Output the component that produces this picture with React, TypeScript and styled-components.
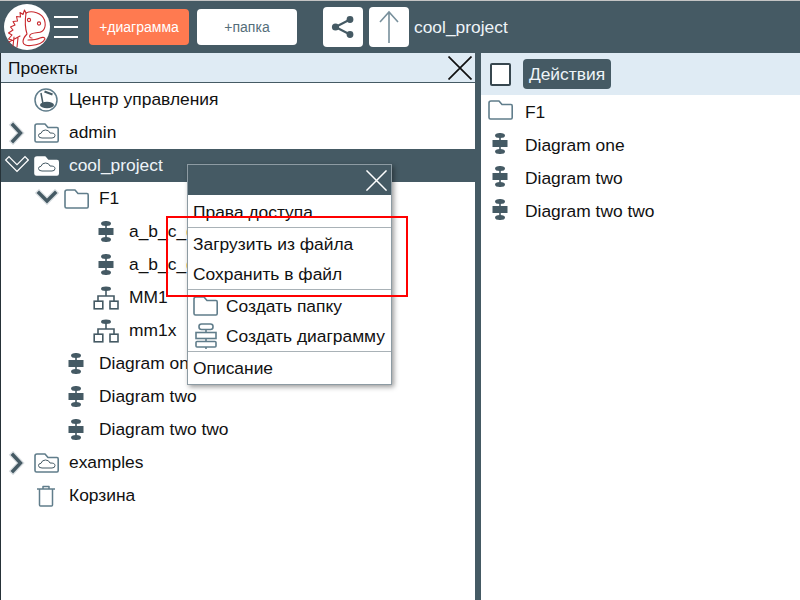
import React from "react";
import styled, { createGlobalStyle } from "styled-components";

const Dark = "#455a64";
const IconLine = "#607d8b";
const PanelHead = "#dfebf4";

const GlobalStyle = createGlobalStyle`
  html, body {
    margin: 0;
    padding: 0;
    width: 800px;
    height: 600px;
    overflow: hidden;
    background: #fff;
    font-family: "Liberation Sans", Arial, sans-serif;
    font-size: 17.4px;
    color: #111;
  }
`;

const Page = styled.div`
  position: relative;
  width: 800px;
  height: 600px;
  display: flex;
  flex-direction: column;
  border-top: 1px solid #c4c4c4;
  box-sizing: border-box;
`;

const TopBar = styled.div`
  height: 52px;
  flex: none;
  display: flex;
  align-items: center;
  background: ${Dark};
  padding-left: 4px;
`;

const LogoSvg = styled.svg`
  width: 46px;
  height: 46px;
  flex: none;
`;

const Burger = styled.div`
  width: 24px;
  height: 22px;
  margin-left: 4px;
  display: flex;
  flex-direction: column;
  justify-content: space-between;
  span {
    display: block;
    height: 2px;
    background: #fff;
  }
`;

const TextButton = styled.button<{ $accent?: boolean; $left: number }>`
  width: 100px;
  height: 36px;
  margin-left: ${(p) => p.$left}px;
  border: none;
  border-radius: 4px;
  padding: 0;
  font-family: inherit;
  font-size: 14px;
  background: ${(p) => (p.$accent ? "#ff7a50" : "#fff")};
  color: ${(p) => (p.$accent ? "#fff" : "#546e7a")};
`;

const IconButton = styled.button<{ $left: number }>`
  width: 40px;
  height: 40px;
  margin-left: ${(p) => p.$left}px;
  border: none;
  border-radius: 4px;
  padding: 0;
  background: #fff;
  display: flex;
  align-items: center;
  justify-content: center;
`;

const ProjectTitle = styled.span`
  margin-left: 5px;
  color: #eef4f8;
`;

const Main = styled.div`
  flex: 1;
  display: flex;
  min-height: 0;
`;

const LeftPane = styled.div`
  width: 475px;
  flex: none;
  box-sizing: border-box;
  border-left: 1px solid #263238;
  overflow: hidden;
`;

const Splitter = styled.div`
  width: 6px;
  flex: none;
  background: ${Dark};
`;

const RightPane = styled.div`
  flex: 1;
  overflow: hidden;
`;

const PaneHeader = styled.div`
  height: 29px;
  display: flex;
  align-items: center;
  justify-content: space-between;
  padding: 0 3px 0 7px;
  background: ${PanelHead};
  border-bottom: 1px solid ${Dark};
`;

const PaneTitle = styled.span`
  padding-top: 2px;
`;

const ActionsHeader = styled.div`
  height: 42px;
  display: flex;
  align-items: center;
  padding-left: 9px;
  background: ${PanelHead};
`;

const CheckBox = styled.div`
  width: 17px;
  height: 19px;
  box-sizing: content-box;
  background: #fff;
  border: 2px solid #37474f;
  border-radius: 2px;
`;

const ActionsButton = styled.button`
  margin-left: 12px;
  width: 88px;
  height: 30px;
  border: none;
  border-radius: 4px;
  padding: 0;
  background: ${Dark};
  color: #eef4f8;
  font-family: inherit;
  font-size: 17.4px;
`;

const Row = styled.div<{ $level?: number; $selected?: boolean }>`
  height: 33px;
  display: flex;
  align-items: center;
  white-space: nowrap;
  padding-left: ${(p) => (p.$level ?? 0) * 30}px;
  background: ${(p) => (p.$selected ? Dark : "transparent")};
  color: ${(p) => (p.$selected ? "#eef4f8" : "#111")};
`;

const Toggle = styled.span`
  width: 31px;
  height: 33px;
  flex: none;
  display: flex;
  align-items: center;
  justify-content: center;
`;

const IconSlot = styled.span`
  width: 28px;
  height: 33px;
  margin-right: 9px;
  flex: none;
  display: flex;
  align-items: center;
  justify-content: center;
`;

const RightRow = styled.div`
  height: 33px;
  box-sizing: border-box;
  display: flex;
  align-items: center;
  padding: 2px 0 0 5px;
  white-space: nowrap;
`;

const RightIcon = styled.span`
  width: 28px;
  margin: -5px 11px 0 0;
  flex: none;
  display: flex;
  justify-content: center;
`;

const OrangeMark = styled.span`
  color: #d9782d;
`;

const Menu = styled.div`
  position: absolute;
  left: 187px;
  top: 163px;
  width: 205px;
  box-sizing: border-box;
  background: #fff;
  border: 1px solid #8d9ba3;
  box-shadow: 2px 2px 5px rgba(0, 0, 0, 0.4);
`;

const MenuHead = styled.div`
  height: 30px;
  display: flex;
  align-items: center;
  justify-content: flex-end;
  padding-right: 4px;
  background: ${Dark};
`;

const MenuSection = styled.div<{ $first?: boolean; $last?: boolean }>`
  padding-top: ${(p) => (p.$first ? 2 : 1)}px;
  padding-bottom: ${(p) => (p.$last ? 1 : 0)}px;
  border-bottom: ${(p) => (p.$last ? "none" : "1px solid #a9b2b7")};
`;

const MenuItem = styled.div`
  height: 30px;
  display: flex;
  align-items: center;
  padding-left: 5px;
  white-space: nowrap;
`;

const MenuIcon = styled.span`
  width: 25px;
  margin-right: 8px;
  flex: none;
  display: flex;
  justify-content: center;
`;

const Highlight = styled.div`
  position: absolute;
  left: 166px;
  top: 215px;
  width: 242px;
  height: 81px;
  box-sizing: border-box;
  border: 2px solid #ff0000;
  pointer-events: none;
`;

const Logo = () => (
  <LogoSvg viewBox="4 4 46 46">
    <circle cx="27" cy="27" r="23" fill="#fff" />
    <g fill="none" stroke="#c8282d" strokeWidth="1.1" strokeLinejoin="round" strokeLinecap="round">
      <path d="M26 13 C32 10 42 13 44.5 20 C46.5 27 44 32 38 32.5 C34 33 31 33 30 35 C29 37 30 38 32 38" />
      <path d="M26 13 L24.5 10 L23 14.5 L20 12.5 L20.5 17 L16.5 16.5 L17.5 21 L13 21.5 L15 25 L10.5 27 L13 30 L8.5 33 L12 35 L8.5 39 L12 40" />
      <path d="M26 13 C25 20 25 28 27 34 C25 36 23 39 23 42 C23 45 27 46 31 45.5 C37 45 43 43 45 39 C45 37 42 37 40 38 C36 40 32 40 28 40" />
      <path d="M9 42 L20 36 M13 46 L14 37 M17 47 L18 38" />
      <circle cx="29" cy="20" r="1.6" />
      <circle cx="39" cy="23.5" r="1.6" />
    </g>
  </LogoSvg>
);

const ShareIcon = () => (
  <svg width="24" height="24" viewBox="0 0 24 24" fill={Dark}>
    <circle cx="4.5" cy="12" r="3.6" />
    <circle cx="19" cy="4.5" r="3.4" />
    <circle cx="19" cy="19.5" r="3.4" />
    <path d="M4.5 12 L19 4.5 M4.5 12 L19 19.5" stroke={Dark} strokeWidth="2" />
  </svg>
);

const UpArrow = () => (
  <svg width="22" height="34" viewBox="0 0 22 34" fill="none" stroke="#78909c" strokeWidth="1.6">
    <path d="M11 33 V2 M2 12 L11 2 L20 12" />
  </svg>
);

const Cross = ({ size, color }: { size: number; color: string }) => (
  <svg width={size} height={size} viewBox="0 0 24 24" stroke={color} strokeWidth="1.7">
    <path d="M0.5 0.5 L23.5 23.5 M23.5 0.5 L0.5 23.5" />
  </svg>
);

const Chevron = ({ open, selected }: { open?: boolean; selected?: boolean }) => {
  const d = open ? "M4 6 L12 14 L20 6" : "M8 4 L15.5 12 L8 20";
  return (
    <svg width="24" height="24" viewBox="0 0 24 24" fill="none" strokeLinecap="square">
      <path d={d} stroke={selected ? "#fff" : "#d9dee1"} strokeWidth="6" />
      <path d={d} stroke={Dark} strokeWidth="3.4" />
    </svg>
  );
};

const Folder = ({ width = 25 }: { width?: number }) => (
  <svg width={width} height="20" viewBox="0 0 25 20" fill="none" stroke={IconLine} strokeWidth="1.6" strokeLinejoin="round">
    <path d="M1 3 Q1 1 3 1 H11 L14 4.5 H23 Q24.2 4.5 24.2 6 V17.5 Q24.2 19 23 19 H2.5 Q1 19 1 17.5 Z" />
  </svg>
);

const CloudFolder = ({ selected }: { selected?: boolean }) => (
  <svg width="25" height="20" viewBox="0 0 25 20" strokeLinejoin="round">
    <path
      d="M1 3 Q1 1 3 1 H11 L14 4.5 H23 Q24.2 4.5 24.2 6 V17.5 Q24.2 19 23 19 H2.5 Q1 19 1 17.5 Z"
      fill={selected ? "#fff" : "none"}
      stroke={selected ? "#fff" : IconLine}
      strokeWidth="1.6"
    />
    <path
      d="M8 15 Q4.5 15 4.5 12.5 Q4.5 10.5 7 10.3 Q8 7 11.5 7 Q15 7 16 10 Q21 9.8 21 12.5 Q21 15 18 15 Z"
      fill="none"
      stroke={Dark}
      strokeWidth="1"
    />
  </svg>
);

const CenterIcon = () => (
  <svg width="24" height="24" viewBox="0 0 24 24" fill="none" stroke={IconLine} strokeWidth="1.5">
    <circle cx="12" cy="12" r="11" />
    <ellipse cx="13" cy="17" rx="7" ry="3.2" fill={Dark} stroke="none" />
    <path d="M7 5 L9 16" stroke={Dark} />
    <path d="M10.5 3.5 L18.5 6.5" stroke={Dark} strokeWidth="2" />
  </svg>
);

const TrashIcon = () => (
  <svg width="20" height="22" viewBox="0 0 20 22" fill="none" stroke={IconLine} strokeWidth="1.5" strokeLinejoin="round">
    <path d="M1 4 H19 M7 4 V1.5 H13 V4" />
    <path d="M3.5 4 V20 Q3.5 21 4.5 21 H15.5 Q16.5 21 16.5 20 V4" />
  </svg>
);

const DiagramIcon = () => (
  <svg width="16" height="23" viewBox="0 0 16 23" fill={Dark}>
    <rect x="7.2" y="1" width="1.6" height="21" />
    <ellipse cx="8" cy="3.5" rx="5" ry="2.5" />
    <rect x="0.5" y="8" width="15" height="7" />
    <ellipse cx="8" cy="19.5" rx="5" ry="2.5" />
  </svg>
);

const ModelIcon = () => (
  <svg width="26" height="24" viewBox="0 0 26 24" fill="none" stroke={Dark} strokeWidth="1.6">
    <ellipse cx="13" cy="2.7" rx="5" ry="2.2" fill={Dark} stroke="none" />
    <path d="M13 3 V10 M5 15 V10 H21 V15" />
    <rect x="1.2" y="15.2" width="8.6" height="7.6" />
    <rect x="17" y="15.2" width="8" height="7.6" />
  </svg>
);

const OutlineDiagramIcon = () => (
  <svg width="22" height="26" viewBox="0 0 22 26" fill="none" stroke={IconLine} strokeWidth="1.6">
    <path d="M11 6 V9 M11 15.5 V18 M11 24 V26" />
    <rect x="4" y="1" width="14" height="5.5" rx="2.5" />
    <rect x="1" y="9.5" width="20" height="6" />
    <rect x="1" y="18.5" width="20" height="5.5" rx="1" />
  </svg>
);

const App = () => {
  return (
    <Page>
      <GlobalStyle />
      <TopBar>
        <Logo />
        <Burger>
          <span />
          <span />
          <span />
        </Burger>
        <TextButton $accent $left={11}>+диаграмма</TextButton>
        <TextButton $left={8}>+папка</TextButton>
        <IconButton $left={26}>
          <ShareIcon />
        </IconButton>
        <IconButton $left={6}>
          <UpArrow />
        </IconButton>
        <ProjectTitle>cool_project</ProjectTitle>
      </TopBar>
      <Main>
        <LeftPane>
          <PaneHeader>
            <PaneTitle>Проекты</PaneTitle>
            <Cross size={24} color="#111" />
          </PaneHeader>
          <Row>
            <Toggle />
            <IconSlot><CenterIcon /></IconSlot>
            Центр управления
          </Row>
          <Row>
            <Toggle><Chevron /></Toggle>
            <IconSlot><CloudFolder /></IconSlot>
            admin
          </Row>
          <Row $selected>
            <Toggle><Chevron open selected /></Toggle>
            <IconSlot><CloudFolder selected /></IconSlot>
            cool_project
          </Row>
          <Row $level={1}>
            <Toggle><Chevron open /></Toggle>
            <IconSlot><Folder /></IconSlot>
            F1
          </Row>
          <Row $level={2}>
            <Toggle />
            <IconSlot><DiagramIcon /></IconSlot>
            a_b_c_<OrangeMark>d</OrangeMark>
          </Row>
          <Row $level={2}>
            <Toggle />
            <IconSlot><DiagramIcon /></IconSlot>
            a_b_c_<OrangeMark>d</OrangeMark>
          </Row>
          <Row $level={2}>
            <Toggle />
            <IconSlot><ModelIcon /></IconSlot>
            MM1
          </Row>
          <Row $level={2}>
            <Toggle />
            <IconSlot><ModelIcon /></IconSlot>
            mm1x
          </Row>
          <Row $level={1}>
            <Toggle />
            <IconSlot><DiagramIcon /></IconSlot>
            Diagram one
          </Row>
          <Row $level={1}>
            <Toggle />
            <IconSlot><DiagramIcon /></IconSlot>
            Diagram two
          </Row>
          <Row $level={1}>
            <Toggle />
            <IconSlot><DiagramIcon /></IconSlot>
            Diagram two two
          </Row>
          <Row>
            <Toggle><Chevron /></Toggle>
            <IconSlot><CloudFolder /></IconSlot>
            examples
          </Row>
          <Row>
            <Toggle />
            <IconSlot><TrashIcon /></IconSlot>
            Корзина
          </Row>
        </LeftPane>
        <Splitter />
        <RightPane>
          <ActionsHeader>
            <CheckBox />
            <ActionsButton>Действия</ActionsButton>
          </ActionsHeader>
          <RightRow>
            <RightIcon><Folder /></RightIcon>
            F1
          </RightRow>
          <RightRow>
            <RightIcon><DiagramIcon /></RightIcon>
            Diagram one
          </RightRow>
          <RightRow>
            <RightIcon><DiagramIcon /></RightIcon>
            Diagram two
          </RightRow>
          <RightRow>
            <RightIcon><DiagramIcon /></RightIcon>
            Diagram two two
          </RightRow>
        </RightPane>
      </Main>
      <Menu>
        <MenuHead>
          <Cross size={21} color="#fff" />
        </MenuHead>
        <MenuSection $first>
          <MenuItem>Права доступа</MenuItem>
        </MenuSection>
        <MenuSection>
          <MenuItem>Загрузить из файла</MenuItem>
          <MenuItem>Сохранить в файл</MenuItem>
        </MenuSection>
        <MenuSection>
          <MenuItem>
            <MenuIcon><Folder /></MenuIcon>
            Создать папку
          </MenuItem>
          <MenuItem>
            <MenuIcon><OutlineDiagramIcon /></MenuIcon>
            Создать диаграмму
          </MenuItem>
        </MenuSection>
        <MenuSection $last>
          <MenuItem>Описание</MenuItem>
        </MenuSection>
      </Menu>
      <Highlight />
    </Page>
  );
};

export default App;
